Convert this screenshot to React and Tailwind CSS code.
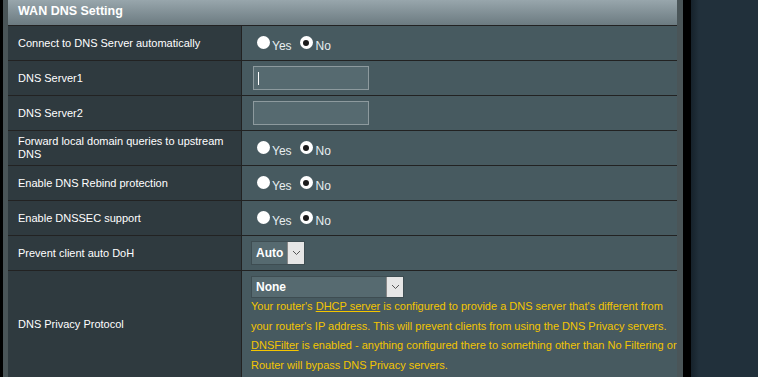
const Radio = ({ checked }) => (
  <span className="inline-flex h-[13px] w-[13px] items-center justify-center rounded-full bg-white">
    {checked && <span className="h-[6px] w-[6px] rounded-full bg-[#1b1b1b]" />}
  </span>
);

const YesNo = () => (
  <div className="flex items-center pb-[2px] pl-[15px]">
    <Radio />
    <span className="ml-[2px] mt-[7px] text-[12px] text-[#e8eef0]">Yes</span>
    <span className="ml-[8px]"><Radio checked /></span>
    <span className="ml-[3px] mt-[7px] text-[12px] text-[#e8eef0]">No</span>
  </div>
);

const Chevron = () => (
  <svg width="9" height="6" viewBox="0 0 9 6" fill="none">
    <path d="M1 1l3.5 3.5L8 1" stroke="#555" strokeWidth="1" />
  </svg>
);

const Row = ({ label, children, tall }) => (
  <div className={`grid grid-cols-[234px_1fr] border-b border-[#222] ${tall ? 'h-[108px]' : 'h-[35px]'}`}>
    <div className="flex items-center border-r border-[#222] bg-[#2f3a3f] pl-[10px] pr-[2px] leading-[13px] text-white">
      {label}
    </div>
    <div className="flex items-center bg-[#475a60]">{children}</div>
  </div>
);

export default function App() {
  return (
    <div className="flex h-[377px] w-[758px] overflow-hidden bg-[#21303b] text-[11px] font-['Liberation_Sans',Arial,sans-serif]">
      <div className="w-[3px] bg-black" />
      <div className="w-[5px] bg-[#4a5558]" />
      <div className="w-[669px] shrink-0 bg-[#475a60]">
        <div className="flex h-[26px] items-center border-b border-[#222] bg-gradient-to-b from-[#98a6ac] to-[#6c7b81] pl-[10px] pb-[2px] text-[12.5px] font-bold text-white">
          WAN DNS Setting
        </div>
        <Row label="Connect to DNS Server automatically"><YesNo /></Row>
        <Row label="DNS Server1">
          <div className="ml-[11px] flex h-[24px] w-[116px] items-center border border-[#8d9a9e] bg-[#566a70] pl-[4px]">
            <span className="h-[13px] w-px bg-white" />
          </div>
        </Row>
        <Row label="DNS Server2">
          <div className="ml-[11px] h-[24px] w-[116px] border border-[#8d9a9e] bg-[#566a70]" />
        </Row>
        <Row label={<span>Forward local domain queries to upstream<br />DNS</span>}><YesNo /></Row>
        <Row label="Enable DNS Rebind protection"><YesNo /></Row>
        <Row label="Enable DNSSEC support"><YesNo /></Row>
        <Row label="Prevent client auto DoH">
          <div className="ml-[9px] flex h-[24px] w-[54px] border border-[#3e4d52] bg-[#566a70]">
            <span className="flex flex-1 items-center pl-[4px] text-[12px] font-bold text-white">Auto</span>
            <span className="flex w-[17px] items-center justify-center border-l border-[#888] bg-[#e6e6e6]"><Chevron /></span>
          </div>
        </Row>
        <Row tall label="DNS Privacy Protocol">
          <div className="flex h-full flex-col self-start pl-[9px] pt-[5px]">
            <div className="flex h-[22px] w-[153px] border border-[#3e4d52] bg-[#566a70]">
              <span className="flex flex-1 items-center pl-[4px] text-[12px] font-bold text-white">None</span>
              <span className="flex w-[17px] items-center justify-center border-l border-[#888] bg-[#e6e6e6]"><Chevron /></span>
            </div>
            <p className="-mt-[1px] w-[430px] leading-[19.5px] text-[#f3c500]">
              Your router's <span className="underline">DHCP server</span> is configured to provide a DNS server that's different from your router's IP address. This will prevent clients from using the DNS Privacy servers.{' '}
              <span className="underline">DNSFilter</span> is enabled - anything configured there to something other than No Filtering or Router will bypass DNS Privacy servers.
            </p>
          </div>
        </Row>
      </div>
      <div className="w-[6px] bg-[#4a5558]" />
      <div className="w-[8px] bg-black" />
      <div className="flex-1 bg-gradient-to-r from-[#16222b] via-[#21303b] via-[8px] to-[#21303b]" />
    </div>
  );
}
